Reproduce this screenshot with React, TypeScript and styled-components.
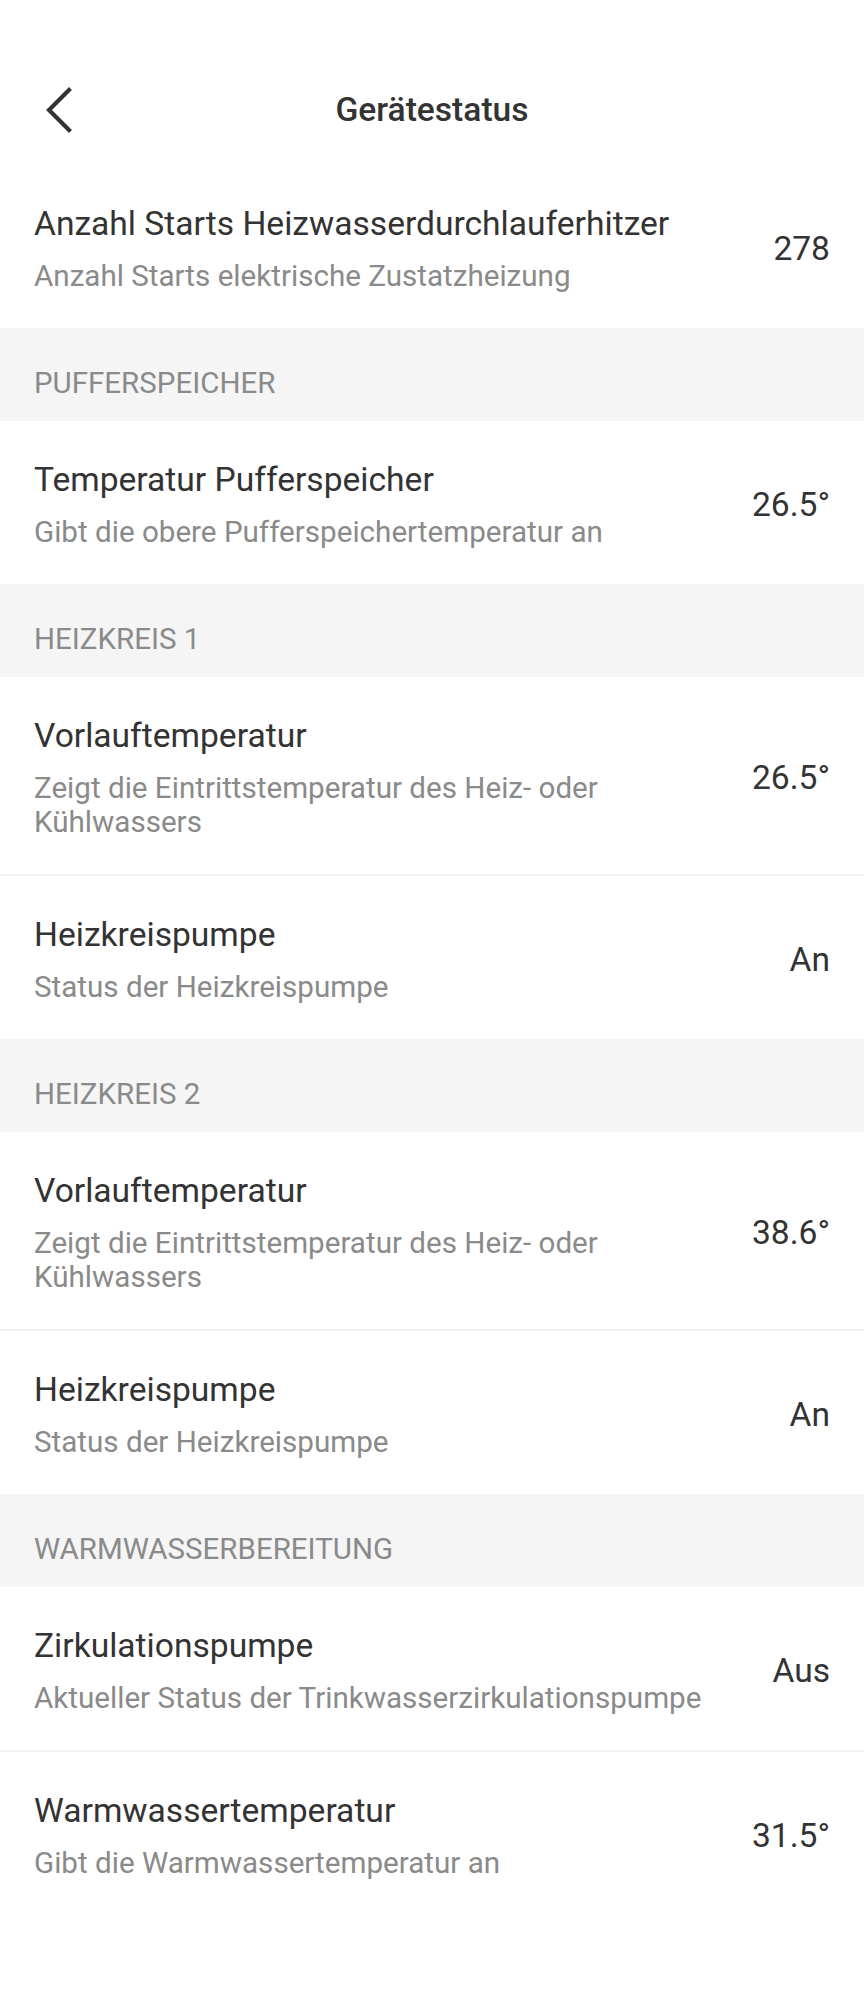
import React from "react";
import styled, { createGlobalStyle } from "styled-components";

const Global = createGlobalStyle`
  html, body { margin: 0; padding: 0; background: #ffffff; }
  body { font-family: Roboto, "Noto Sans", sans-serif; -webkit-font-smoothing: antialiased; }
  * { box-sizing: border-box; }
`;

const Page = styled.div`
  width: 864px;
  min-height: 2016px;
  background: #ffffff;
  display: flex;
  flex-direction: column;
`;

const Header = styled.header`
  height: 165px;
  padding-top: 54px;
  display: grid;
  grid-template-columns: 1fr auto 1fr;
  align-items: center;
`;

const BackButton = styled.button`
  justify-self: start;
  margin-left: 44px;
  padding: 0;
  border: 0;
  background: transparent;
  width: 30px;
  height: 46px;
  display: flex;
  align-items: center;
  justify-content: center;
  color: #333333;
`;

const Title = styled.h1`
  margin: 0;
  font-size: 33.6px;
  font-weight: 500;
  color: #333333;
  line-height: 40px;
`;

const List = styled.div`
  display: flex;
  flex-direction: column;
`;

const SectionHeader = styled.div`
  height: 93px;
  background: #f5f5f5;
  padding: 0 34px 20px;
  display: flex;
  align-items: flex-end;
  font-size: 29.5px;
  line-height: 33.6px;
  color: #8a8a8a;
`;

const Row = styled.div<{ $divider?: boolean }>`
  display: flex;
  align-items: center;
  gap: 24px;
  padding: 39px 34px 35px 34px;
  border-top: ${(p) => (p.$divider ? "2px solid #f1f1f1" : "none")};
  background: #ffffff;
`;

const TextCol = styled.div`
  flex: 1;
  min-width: 0;
  display: flex;
  flex-direction: column;
`;

const RowTitle = styled.div`
  font-size: 33.6px;
  line-height: 40px;
  color: #333333;
  margin-bottom: 15px;
`;

const RowSub = styled.div`
  font-size: 29.6px;
  line-height: 34px;
  color: #8a8a8a;
`;

const Value = styled.div`
  font-size: 33.6px;
  line-height: 40px;
  color: #333333;
  white-space: nowrap;
`;

type Item = { title: string; sub: string; value: string };
type Section = { header?: string; items: Item[] };

const sections: Section[] = [
  {
    items: [
      {
        title: "Anzahl Starts Heizwasserdurchlauferhitzer",
        sub: "Anzahl Starts elektrische Zustatzheizung",
        value: "278",
      },
    ],
  },
  {
    header: "PUFFERSPEICHER",
    items: [
      {
        title: "Temperatur Pufferspeicher",
        sub: "Gibt die obere Pufferspeichertemperatur an",
        value: "26.5°",
      },
    ],
  },
  {
    header: "HEIZKREIS 1",
    items: [
      {
        title: "Vorlauftemperatur",
        sub: "Zeigt die Eintrittstemperatur des Heiz- oder Kühlwassers",
        value: "26.5°",
      },
      { title: "Heizkreispumpe", sub: "Status der Heizkreispumpe", value: "An" },
    ],
  },
  {
    header: "HEIZKREIS 2",
    items: [
      {
        title: "Vorlauftemperatur",
        sub: "Zeigt die Eintrittstemperatur des Heiz- oder Kühlwassers",
        value: "38.6°",
      },
      { title: "Heizkreispumpe", sub: "Status der Heizkreispumpe", value: "An" },
    ],
  },
  {
    header: "WARMWASSERBEREITUNG",
    items: [
      {
        title: "Zirkulationspumpe",
        sub: "Aktueller Status der Trinkwasserzirkulationspumpe",
        value: "Aus",
      },
      {
        title: "Warmwassertemperatur",
        sub: "Gibt die Warmwassertemperatur an",
        value: "31.5°",
      },
    ],
  },
];

const ChevronLeft = () => (
  <svg width="30" height="46" viewBox="0 0 30 46" fill="none">
    <polyline
      points="25,3 5,23 25,43"
      stroke="currentColor"
      strokeWidth="4.2"
      strokeLinecap="square"
      strokeLinejoin="miter"
    />
  </svg>
);

export default function App() {
  return (
    <>
      <Global />
      <Page>
        <Header>
          <BackButton aria-label="Zurück">
            <ChevronLeft />
          </BackButton>
          <Title>Gerätestatus</Title>
          <span />
        </Header>
        <List>
          {sections.map((s, si) => (
            <React.Fragment key={si}>
              {s.header && <SectionHeader>{s.header}</SectionHeader>}
              {s.items.map((it, ii) => (
                <Row key={ii} $divider={ii > 0}>
                  <TextCol>
                    <RowTitle>{it.title}</RowTitle>
                    <RowSub>{it.sub}</RowSub>
                  </TextCol>
                  <Value>{it.value}</Value>
                </Row>
              ))}
            </React.Fragment>
          ))}
        </List>
      </Page>
    </>
  );
}
